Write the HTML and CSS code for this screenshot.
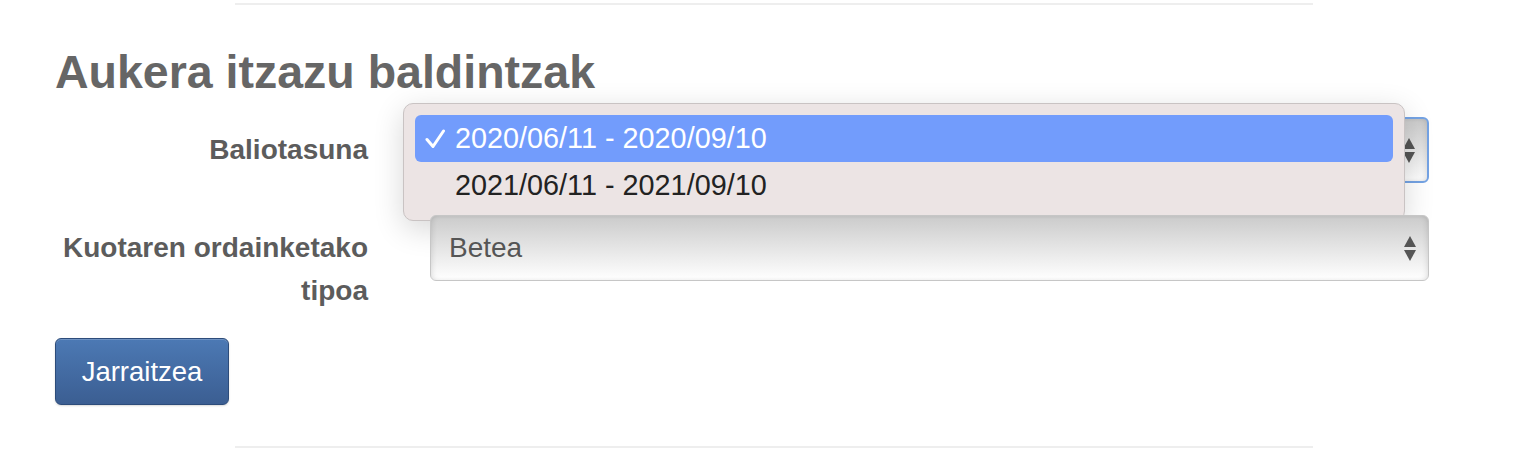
FILE: index.html
```html
<!DOCTYPE html>
<html lang="eu">
<head>
    <meta charset="UTF-8">
    <meta name="viewport" content="width=device-width, initial-scale=1.0">
    <title>Aukera itzazu baldintzak</title>
    <link rel="stylesheet" href="styles.css">
</head>
<body>
    <div class="page">
        <hr class="rule">

        <h2 class="title">Aukera itzazu baldintzak</h2>

        <form class="form">
            <div class="row">
                <label class="label">Baliotasuna</label>
                <div class="field">
                    <div class="select focused">
                        <span class="value">2020/06/11 - 2020/09/10</span>
                        <span class="arrows"><i class="up"></i><i class="down"></i></span>
                    </div>

                    <div class="popup">
                        <div class="option selected">
                            <svg class="check" width="20" height="20" viewBox="0 0 20 20">
                                <path d="M2 10.5 L8 17.5 L18.5 2" fill="none" stroke="#fff" stroke-width="3" stroke-linecap="round" stroke-linejoin="round"/>
                            </svg>
                            2020/06/11 - 2020/09/10
                        </div>
                        <div class="option">2021/06/11 - 2021/09/10</div>
                    </div>
                </div>
            </div>

            <div class="row">
                <label class="label">Kuotaren ordainketako tipoa</label>
                <div class="field">
                    <div class="select">
                        <span class="value">Betea</span>
                        <span class="arrows"><i class="up"></i><i class="down"></i></span>
                    </div>
                </div>
            </div>

            <button type="button" class="btn">Jarraitzea</button>
        </form>

        <hr class="rule">
    </div>
</body>
</html>
```

FILE: styles.css
```css
html, body {
    margin: 0;
    background: #fff;
    font-family: "Liberation Sans", Arial, sans-serif;
}

.page {
    padding: 3px 0 0 55px;
}

.rule {
    margin: 0 0 0 180px;
    width: 1078px;
    border: 0;
    border-top: 2px solid #eeeeee;
}

.title {
    margin: 39px 0 17px;
    font-size: 46.5px;
    line-height: 56px;
    font-weight: bold;
    color: #666666;
}

.form {
    width: 1374px;
    margin-bottom: 41px;
}

.row {
    display: grid;
    grid-template-columns: 313px 1fr;
    column-gap: 62px;
    margin-bottom: 32px;
}

.row:last-of-type {
    margin-bottom: 26px;
}

.label {
    padding-top: 11px;
    text-align: right;
    font-size: 28px;
    line-height: 43px;
    font-weight: bold;
    color: #5c5c5c;
}

.field {
    position: relative;
}

.select {
    height: 66px;
    box-sizing: border-box;
    border: 1px solid #c6c6c6;
    border-radius: 6px;
    background: linear-gradient(#cbcbcb, #f2f2f2 75%, #ffffff);
    box-shadow: inset 3px 0 6px -3px rgba(0, 0, 0, 0.15), inset -3px 0 6px -3px rgba(0, 0, 0, 0.15);
    display: flex;
    align-items: center;
    justify-content: space-between;
    padding: 0 12px 0 18px;
    font-size: 28px;
    color: #555555;
}

.select.focused {
    border: 2px solid #74a3e4;
}

/* the open list covers the current value */
.select.focused .value {
    visibility: hidden;
}

.arrows {
    display: flex;
    flex-direction: column;
    gap: 3px;
}

.arrows i {
    width: 0;
    height: 0;
    border-left: 6.5px solid transparent;
    border-right: 6.5px solid transparent;
}

.arrows .up {
    border-bottom: 11px solid #555555;
}

.arrows .down {
    border-top: 11px solid #555555;
}

.popup {
    position: absolute;
    left: -27px;
    top: -14px;
    width: 1002px;
    box-sizing: border-box;
    padding: 11px;
    background: #ece4e4;
    border: 1px solid #c9c3c3;
    border-radius: 10px;
    box-shadow: 0 8px 30px rgba(0, 0, 0, 0.16);
}

.option {
    height: 47px;
    display: flex;
    align-items: center;
    padding-left: 40px;
    font-size: 28.8px;
    color: #222222;
    border-radius: 6px;
    position: relative;
}

.option.selected {
    background: #729cfc;
    color: #ffffff;
}

.check {
    position: absolute;
    left: 10px;
    top: 14px;
}

.btn {
    display: block;
    width: 174px;
    height: 67px;
    padding: 0;
    font-family: "Liberation Sans", Arial, sans-serif;
    font-size: 27.5px;
    color: #ffffff;
    background: linear-gradient(#4c79b4, #3b5e92);
    border: 1px solid #2d4c7a;
    border-radius: 6px;
    box-shadow: inset 0 1px 0 rgba(255, 255, 255, 0.2), 0 1px 2px rgba(0, 0, 0, 0.15);
    cursor: pointer;
}
```
